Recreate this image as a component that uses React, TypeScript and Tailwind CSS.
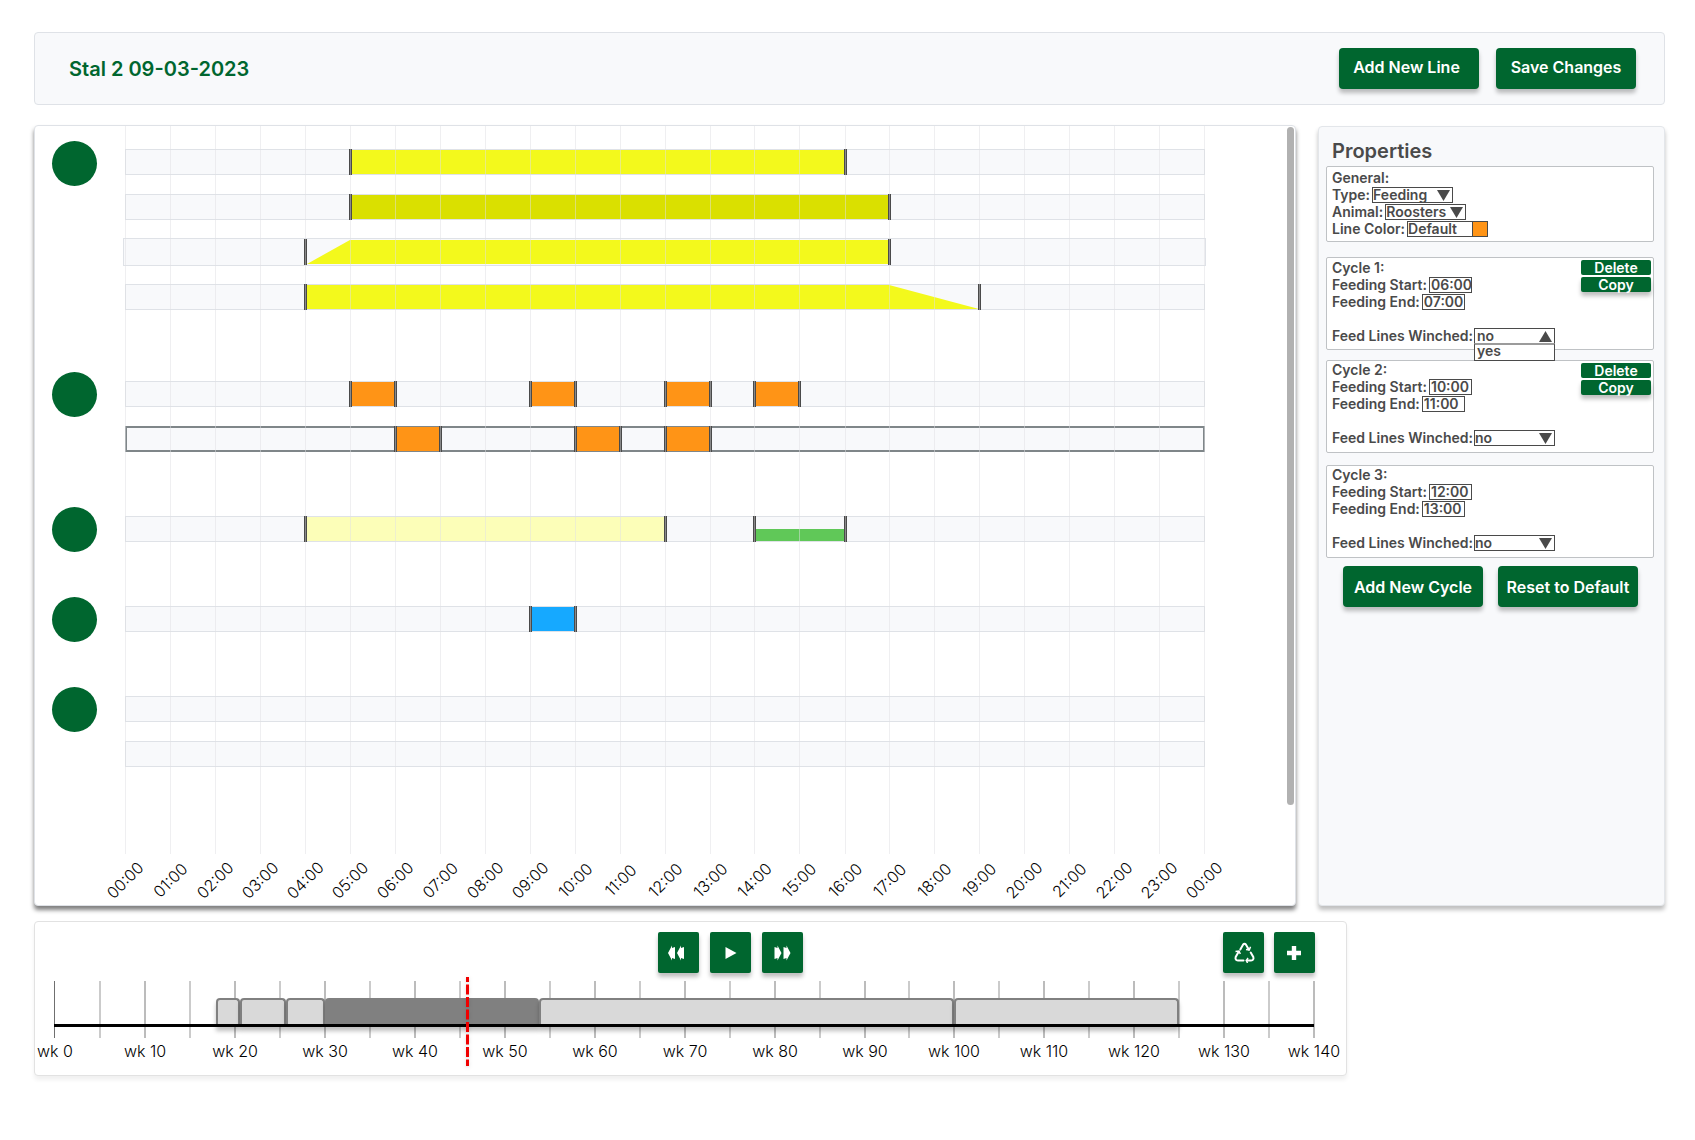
import React from "react";

type Segment = {
  from: number;
  to: number;
  color: string;
  half?: boolean;
  flatFrom?: number;
  flatTo?: number;
};
type Lane = { variant?: "plain" | "raised" | "selected"; segments: Segment[] };

const YELLOW = "#f3f91c";
const ORANGE = "#ff9416";

const groups: { gap: string; lanes: Lane[] }[] = [
  {
    gap: "mt-0",
    lanes: [
      { segments: [{ from: 5, to: 16, color: YELLOW }] },
      { segments: [{ from: 5, to: 17, color: "#dae000" }] },
      { variant: "raised", segments: [{ from: 4, to: 17, color: YELLOW, flatFrom: 5 }] },
      { segments: [{ from: 4, to: 19, color: YELLOW, flatTo: 17 }] },
    ],
  },
  {
    gap: "mt-[71px]",
    lanes: [
      {
        segments: [
          { from: 5, to: 6, color: ORANGE },
          { from: 9, to: 10, color: ORANGE },
          { from: 12, to: 13, color: ORANGE },
          { from: 14, to: 15, color: ORANGE },
        ],
      },
      {
        variant: "selected",
        segments: [
          { from: 6, to: 7, color: ORANGE },
          { from: 10, to: 11, color: ORANGE },
          { from: 12, to: 13, color: ORANGE },
        ],
      },
    ],
  },
  {
    gap: "mt-16",
    lanes: [
      {
        segments: [
          { from: 4, to: 12, color: "#fcfeb8" },
          { from: 14, to: 16, color: "#60c858", half: true },
        ],
      },
    ],
  },
  { gap: "mt-16", lanes: [{ segments: [{ from: 9, to: 10, color: "#16a9ff" }] }] },
  { gap: "mt-16", lanes: [{ segments: [] }, { segments: [] }] },
];

const hourLeft = (h: number) => `calc(100% * ${h} / 24 - ${h > 13 && h !== 16 ? 1 : 0}px)`;
const hourSpan = (a: number, b: number) => `calc(100% * ${b - a} / 24 - ${b > 16 ? 1 : 0}px)`;

function outline(s: Segment) {
  const pct = (h: number) => `${((h - s.from) / (s.to - s.from)) * 100}%`;
  if (s.flatFrom !== undefined) return `polygon(2px 100%, ${pct(s.flatFrom)} 0, 100% 0, 100% 100%)`;
  if (s.flatTo !== undefined) return `polygon(0 0, ${pct(s.flatTo)} 0, 100% 100%, 0 100%)`;
  return undefined;
}

function Handle({ hour }: { hour: number }) {
  return (
    <span
      className="absolute inset-y-0 z-20 -ml-px w-[3px] border-x border-[#4a4a4a] bg-[#8a8a8a]"
      style={{ left: hourLeft(hour) }}
    />
  );
}

function LaneRow({ lane }: { lane: Lane }) {
  const track =
    lane.variant === "raised"
      ? "-inset-y-px -left-0.5 -right-px border border-[#dfe2e7]"
      : lane.variant === "selected"
        ? "inset-0 border-2 border-[#7f8689]"
        : "inset-0 border border-[#dfe2e7]";
  return (
    <div className="relative h-[26px]">
      <div className={`absolute bg-[#f8f9fb] ${track}`} />
      {lane.segments.map((s) => (
        <React.Fragment key={s.from}>
          <div
            className="absolute inset-y-px"
            style={{ left: hourLeft(s.from), width: hourSpan(s.from, s.to) }}
          >
            <div
              className={s.half ? "mt-3 h-3" : "h-6"}
              style={{ backgroundColor: s.color, clipPath: outline(s) }}
            />
          </div>
          <Handle hour={s.from} />
          <Handle hour={s.to} />
        </React.Fragment>
      ))}
    </div>
  );
}

function Schedule() {
  const hours = Array.from({ length: 25 }, (_, i) => i);
  return (
    <main className="relative min-w-0 flex-1 rounded border border-[#dfe2e7] bg-white shadow-[0_4px_4px_rgba(0,0,0,0.5)]">
      <div className="relative pt-[23px] pb-[87px]">
        {groups.map((g, i) => (
          <section key={i} className={`flex ${g.gap}`}>
            <div className={`w-[90px] shrink-0 pl-[17px] ${i === 0 ? "pt-px" : ""}`}>
              <div className="-mt-[9px] -mb-2.5 size-[45px] rounded-full bg-[#00662f]" />
            </div>
            <div className="mr-[90px] flex flex-1 flex-col gap-[19px]">
              {g.lanes.map((l, j) => (
                <LaneRow key={j} lane={l} />
              ))}
            </div>
          </section>
        ))}
        <div className="pointer-events-none absolute inset-y-0 right-[90px] left-[90px] z-10">
          {hours.map((h) => (
            <span
              key={h}
              className="absolute inset-y-0 w-px bg-[#dfe0e4]/50"
              style={{ left: hourLeft(h) }}
            />
          ))}
        </div>
      </div>
      <div className="relative mx-[90px] h-[51px]">
        {hours.map((h) => (
          <div key={h} className="absolute top-[18px] flex w-0 justify-center" style={{ left: hourLeft(h) }}>
            <span className="-rotate-45 text-base/4 font-light text-black">
              {String(h % 24).padStart(2, "0")}:00
            </span>
          </div>
        ))}
      </div>
      <div className="absolute top-px right-px h-[87%] w-[7px] rounded-full bg-[#b1b1b1]" />
    </main>
  );
}

function Triangle({ up = false }: { up?: boolean }) {
  return (
    <svg viewBox="0 0 13 11" className="pointer-events-none absolute top-0.5 right-0.5 h-[11px] w-[13px] fill-[#4a4a4a]">
      {up ? <path d="M6.5 0L13 11H0z" /> : <path d="M0 0H13L6.5 11z" />}
    </svg>
  );
}

function SelectField(props: { id: string; label: string; options: string[]; open?: boolean; tight?: boolean }) {
  return (
    <div className={`flex h-[17px] items-center ${props.tight ? "gap-px" : "gap-0.5"}`}>
      <label htmlFor={props.id}>{props.label}</label>
      <div className="relative h-4 w-[81px] border border-[#4a4a4a] bg-white">
        <select id={props.id} className={`block h-3.5 w-full appearance-none leading-3.5 outline-none ${props.open ? "pl-0.5" : ""}`}>
          {props.options.map((o) => (
            <option key={o}>{o}</option>
          ))}
        </select>
        <Triangle up={props.open} />
        {props.open && (
          <div
            role="listbox"
            className="absolute top-3.5 -right-px -left-px z-10 h-[18px] border border-t-2 border-[#4a4a4a] border-t-[#9b9b9b] bg-white pl-0.5"
          >
            <div role="option" aria-selected="false" className="leading-3">
              {props.options[1]}
            </div>
          </div>
        )}
      </div>
    </div>
  );
}

function TimeField({ id, label, value }: { id: string; label: string; value: string }) {
  return (
    <div className="flex h-[17px] items-center gap-0.5">
      <label htmlFor={id}>{label}</label>
      <input id={id} defaultValue={value} className="h-4 w-[43px] border border-[#4a4a4a] bg-white pl-px leading-3.5 outline-none" />
    </div>
  );
}

const smallButton = "h-[15px] w-[70px] rounded-xs bg-[#00662f] text-center leading-3.5 text-white";

function Cycle(props: { n: number; start: string; end: string; gap: string; actions?: boolean; open?: boolean }) {
  return (
    <fieldset
      className={`relative h-[93px] rounded-xs border border-[#bfc2c5] bg-white pl-[5px] ${props.open ? "pt-px" : ""} ${props.gap}`}
    >
      <h3>Cycle {props.n}:</h3>
      <TimeField id={`start-${props.n}`} label="Feeding Start:" value={props.start} />
      <TimeField id={`end-${props.n}`} label="Feeding End:" value={props.end} />
      <div className="mt-[17px]">
        <SelectField id={`winched-${props.n}`} label="Feed Lines Winched:" options={["no", "yes"]} open={props.open} tight />
      </div>
      {props.actions && (
        <div className="absolute top-0.5 right-0.5 flex flex-col gap-0.5">
          <button className={smallButton}>Delete</button>
          <button className={`${smallButton} shadow-[0_4px_4px_rgba(0,0,0,0.25)]`}>Copy</button>
        </div>
      )}
    </fieldset>
  );
}

const bigButton =
  "h-[41px] w-[140px] rounded bg-[#00662f] text-base/5 font-semibold whitespace-nowrap text-white shadow-[0_4px_4px_rgba(0,0,0,0.25)]";

function Properties() {
  return (
    <aside className="mt-px w-[347px] shrink-0 rounded border border-[#e3e6ea] bg-[#f8f9fb] pr-2.5 pl-[7px] text-sm/[17px] font-semibold text-[#4a4a4a] shadow-[0_4px_4px_rgba(0,0,0,0.25)]">
      <h2 className="mt-3 mb-[3px] pl-1.5 text-xl/6 font-semibold">Properties</h2>
      <fieldset className="h-[76px] rounded-xs border border-[#bfc2c5] bg-white pt-0.5 pl-[5px]">
        <h3>General:</h3>
        <SelectField id="type" label="Type:" options={["Feeding"]} />
        <SelectField id="animal" label="Animal:" options={["Roosters"]} />
        <div className="flex h-[17px] items-center gap-0.5">
          <label htmlFor="line-color">Line Color:</label>
          <div className="flex h-4 w-[81px] border border-[#4a4a4a] bg-white">
            <input id="line-color" defaultValue="Default" className="h-3.5 w-16 leading-3.5 outline-none" />
            <span className="flex-1 border-l border-[#4a4a4a] bg-[#ff9416]" />
          </div>
        </div>
      </fieldset>
      <Cycle n={1} start="06:00" end="07:00" gap="mt-[15px]" actions open />
      <Cycle n={2} start="10:00" end="11:00" gap="mt-2.5" actions />
      <Cycle n={3} start="12:00" end="13:00" gap="mt-3" />
      <div className="mt-2 flex gap-[15px] pl-[17px]">
        <button className={bigButton}>Add New Cycle</button>
        <button className={bigButton}>Reset to Default</button>
      </div>
    </aside>
  );
}

const iconButton =
  "flex size-[41px] items-center justify-center rounded-xs bg-[#00662f] text-white shadow-[0_4px_4px_rgba(0,0,0,0.25)]";

const phases = [
  { from: 18, to: 20.7 },
  { from: 20.7, to: 25.8 },
  { from: 25.8, to: 30.1 },
  { from: 30.1, to: 53.9, active: true },
  { from: 53.9, to: 100 },
  { from: 100, to: 125 },
];
const weekLeft = (w: number) => `${(w / 140) * 100}%`;

function Timeline() {
  const ticks = Array.from({ length: 29 }, (_, i) => i * 5);
  return (
    <footer className="mt-[15px] h-[155px] w-[80.5%] rounded border border-[#e2e2e2] bg-white pt-2.5 shadow-[0_4px_4px_rgba(0,0,0,0.06)]">
      <div className="flex">
        <div className="ml-[47.5%] flex gap-[11px]">
          <button aria-label="Rewind" className={iconButton}>
            <svg viewBox="0 0 17 16" className="mr-1 h-4 w-[17px] fill-current">
              <path d="M0 8 4 .5V3L7 2V14L4 13V15.5z" />
              <path d="M9 8 13 .5V3L16 2V14L13 13V15.5z" />
            </svg>
          </button>
          <button aria-label="Play" className={iconButton}>
            <svg viewBox="0 0 12 12" className="ml-px size-3 fill-current">
              <path d="M.5 0 11.5 6 .5 12z" />
            </svg>
          </button>
          <button aria-label="Fast forward" className={iconButton}>
            <svg viewBox="0 0 17 16" className="h-4 w-[17px] fill-current">
              <path d="M7.5 8 3.5 .5V3L.5 2V14L3.5 13V15.5z" />
              <path d="M16.5 8 12.5 .5V3L9.5 2V14L12.5 13V15.5z" />
            </svg>
          </button>
        </div>
        <div className="mr-[31px] ml-auto flex gap-2.5">
          <button aria-label="Recycle" className={iconButton}>
            <svg viewBox="0 0 21 21" className="ml-0.5 size-[21px] fill-none stroke-current stroke-2">
              <path d="M6.3 7.5 9 2.7Q10.5 .6 12 2.7L14.8 7.5" strokeLinecap="round" />
              <path d="M4.5 10 1.7 15Q.8 18.2 4 18.5H9.5" strokeLinecap="round" />
              <path d="M16.7 10.5 19.3 15Q20.2 18.2 17 18.5H12.5" strokeLinecap="round" />
              <path d="M12 7.5 15.3 8 16.5 4.8M14 16 12.5 18.5 13.5 21M1.5 9.5 5 9 6.3 12" className="stroke-[1.5]" />
            </svg>
          </button>
          <button aria-label="Add" className={iconButton}>
            <svg viewBox="0 0 14 14" className="size-3.5 fill-current">
              <path d="M4.8 0H9.2V4.8H14V9.2H9.2V14H4.8V9.2H0V4.8H4.8z" />
            </svg>
          </button>
        </div>
      </div>
      <div className="relative mt-2 mr-8 ml-[19px] h-[90px]">
        {ticks.map((w) => (
          <React.Fragment key={w}>
            <span
              className={`absolute top-0 h-[57px] ${w === 0 ? "w-px bg-[#6f6f6f]" : w % 10 ? "w-0.5 bg-[#cbcbcb]" : "w-0.5 bg-[#bcbcbc]"} ${w > 90 ? "-ml-px" : ""}`}
              style={{ left: weekLeft(w) }}
            />
            {w % 10 === 0 && (
              <span
                className={`absolute top-[58px] flex w-0 justify-center text-base/6 font-light whitespace-nowrap text-black ${w > 90 ? "" : "ml-px"}`}
                style={{ left: weekLeft(w) }}
              >
                wk {w}
              </span>
            )}
          </React.Fragment>
        ))}
        {phases.map((p) => (
          <div
            key={p.from}
            className={`absolute top-[17px] h-[29px] rounded-t border-2 border-b-0 border-[#808080] shadow-[0_4px_4px_rgba(0,0,0,0.25)] ${p.active ? "bg-[#808080]" : "bg-[#d9d9d9]"}`}
            style={{ left: weekLeft(p.from), width: weekLeft(p.to - p.from) }}
          />
        ))}
        <div className="absolute inset-x-0 top-[43px] h-[3px] bg-black" />
        <svg className="absolute -top-1 -ml-0.5 h-[89px] w-[3px] overflow-visible drop-shadow" style={{ left: weekLeft(46) }}>
          <path d="M1.5 0V89" stroke="#f00000" strokeWidth="3" strokeDasharray="10 2.5" strokeDashoffset="5" />
        </svg>
      </div>
    </footer>
  );
}

export default function App() {
  return (
    <div className="bg-white pt-8 pr-[30px] pb-16 pl-[34px] font-['Inter',sans-serif]">
      <header className="flex h-[73px] items-center gap-[17px] rounded border border-[#dfe2e7] bg-[#f8f9fb] pr-7 pl-[34px]">
        <h1 className="mr-auto text-xl/6 font-semibold text-[#00662f]">Stal 2 09-03-2023</h1>
        <button className={`${bigButton} pr-[5px] pb-[3px]`}>Add New Line</button>
        <button className={`${bigButton} pb-[3px]`}>Save Changes</button>
      </header>
      <div className="mt-5 flex gap-[22px]">
        <Schedule />
        <Properties />
      </div>
      <Timeline />
    </div>
  );
}
